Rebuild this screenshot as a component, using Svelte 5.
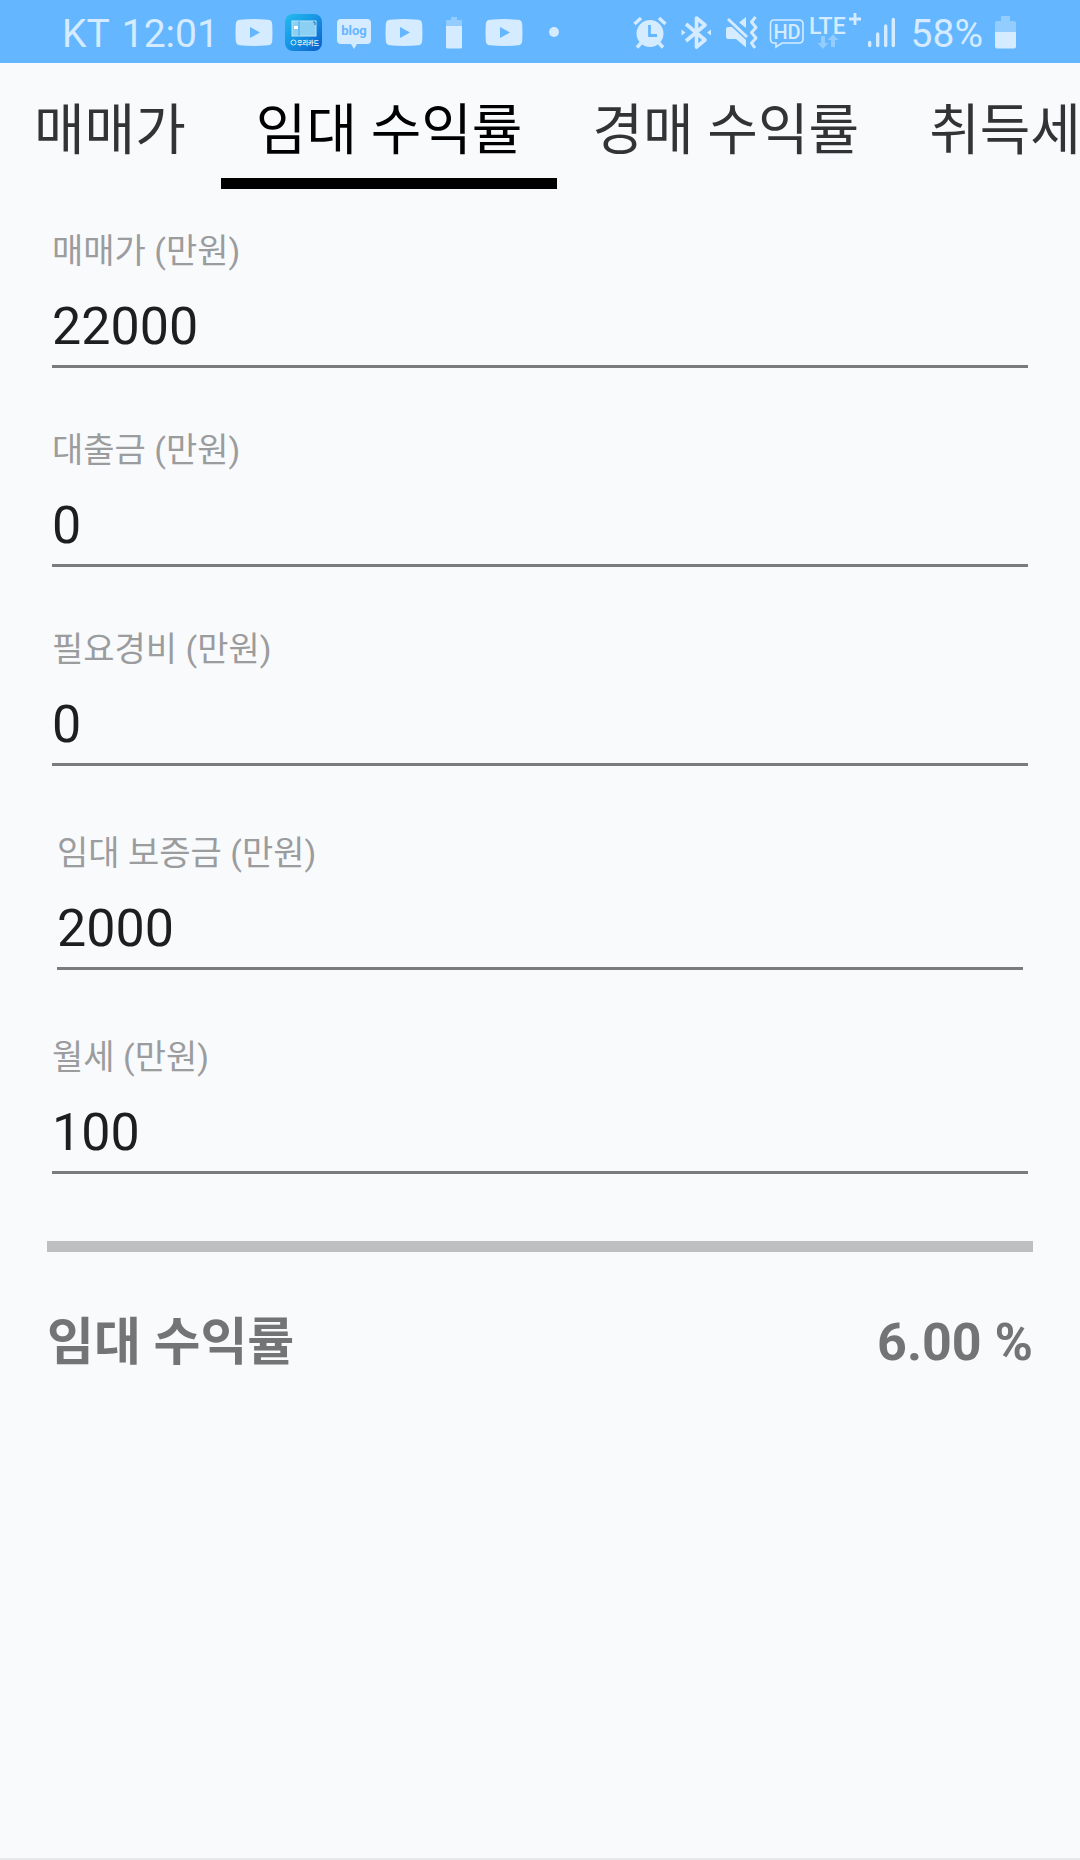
<script>
	const tabs = ['매매가', '임대 수익률', '경매 수익률', '취득세'];
	const notifications = ['video', 'card', 'blog', 'video', 'charge', 'video', 'dot'];

	let active = $state(1);

	let fields = $state([
		{ id: 'price', label: '매매가 (만원)', value: '22000' },
		{ id: 'loan', label: '대출금 (만원)', value: '0' },
		{ id: 'cost', label: '필요경비 (만원)', value: '0' },
		{ id: 'deposit', label: '임대 보증금 (만원)', value: '2000', inset: true },
		{ id: 'rent', label: '월세 (만원)', value: '100' }
	]);

	let rate = $derived.by(() => {
		const [price, loan, cost, deposit, rent] = fields.map((f) => Number(f.value) || 0);
		const invested = price - loan + cost - deposit;
		return invested > 0 ? ((rent * 12) / invested) * 100 : 0;
	});
</script>

<div class="app">
	<header class="status">
		<div class="status__left">
			<div class="status__text status__text--clock">
				<span>KT</span>
				<span>12:01</span>
			</div>
			<div class="status__icons">
				{#each notifications as icon}
					<svg width="38" height="38" viewBox="0 0 38 38" aria-hidden="true">
						{#if icon === 'video'}
							<path class="fill" d="M5 6.800Q19 5.400 33 6.800Q37 7 37.200 11Q37.700 19.500 37.200 28Q37 32 33 32.300Q19 33.600 5 32.300Q1 32 .8 28Q.2 19.500 .8 11Q1 7 5 6.800Z" />
							<path class="cut" d="M15 14L25 19.500L15 25Z" />
						{:else if icon === 'card'}
							<defs>
								<linearGradient id="card" x1="0" y1="0" x2="1" y2="1">
									<stop offset="0" stop-color="#25bdf0" />
									<stop offset=".5" stop-color="#1592e2" />
									<stop offset="1" stop-color="#0b5cc9" />
								</linearGradient>
							</defs>
							<rect x="0" y="1" width="37" height="37" rx="8" fill="url(#card)" />
							<rect x="7" y="8" width="24" height="15" fill="#8bd0f3" stroke="#b9e4fa" />
							<path d="M14 8V23" stroke="#4aa9e4" />
							<path d="M9 13h4v3h-4z" fill="#fff" />
							<path d="M28 9h2v3" fill="none" stroke="#1a6fb8" />
							<circle cx="8.500" cy="29.500" r="2.500" fill="none" stroke="#d5ebff" />
							<text x="12" y="32" font-size="6" font-weight="700" fill="#e8f5ff">우리카드</text>
						{:else if icon === 'blog'}
							<path class="fill" d="M6 6H32Q36 6 36 10V27Q36 31 32 31H22L19 36L16 31H6Q2 31 2 27V10Q2 6 6 6Z" />
							<text class="cut blog" x="19" y="22" text-anchor="middle">blog</text>
						{:else if icon === 'charge'}
							<path class="dim" d="M16 4h6v3h4q1 0 1 1v6H11V8q0-1 1-1h4z" />
							<path class="fill" d="M11 13h16v21q0 1.500-1.500 1.500h-13Q11 35.500 11 34z" />
						{:else}
							<circle class="fill" cx="19" cy="19" r="5" />
						{/if}
					</svg>
				{/each}
			</div>
		</div>

		<div class="status__right">
			<!-- alarm -->
			<svg width="42" height="38" viewBox="0 0 42 38" aria-hidden="true">
				<circle class="fill" cx="19" cy="20.500" r="13.500" />
				<path class="line" stroke-width="3.400" d="M3.500 11L10 5M28 5L34.500 11M10 30L6 34.500M28 30L32 34.500" />
				<path class="line line--cut" stroke-width="2.800" d="M18.500 12V22.500H26" />
			</svg>
			<!-- bluetooth -->
			<svg width="42" height="38" viewBox="0 0 42 38" aria-hidden="true">
				<path class="line" stroke-width="3.600" stroke-linejoin="round" d="M9 11L28 27L19.500 34V5L28 12L9 28" />
				<path class="fill" d="M4.500 16.500L8.500 19.500L4.500 22.500ZM34 16.500V22.500L30 19.500Z" />
			</svg>
			<!-- muted, vibrating -->
			<svg width="42" height="38" viewBox="0 0 42 38" aria-hidden="true">
				<path class="fill" d="M5 14H9L23 27V34.500L13 26H5Q3 26 3 24V16Q3 14 5 14Z" />
				<path class="fill" d="M23 4V15L16 9.500Z" />
				<path class="line" stroke-width="3" d="M5 6L24 24" />
				<path class="line" stroke-width="3" stroke-linejoin="round" d="M32.500 4L28.500 9L33 14.500L28.500 19.500L33 25L28.500 30L32 35" />
			</svg>
			<!-- HD call -->
			<svg width="36" height="38" viewBox="0 0 36 38" aria-hidden="true">
				<path class="line" stroke-width="1.600" d="M5 7H30Q34 7 34 11V26Q34 30 30 30H13L7 34V30H5Q1.500 30 1.500 26V11Q1.500 7 5 7Z" />
				<text class="fill hd" x="18" y="25.500" text-anchor="middle">HD</text>
			</svg>
			<svg width="54" height="38" viewBox="0 0 54 38" aria-hidden="true">
				<text class="fill lte" x="0" y="21">LTE</text>
				<path class="line" stroke-width="2.800" d="M46 0V12M40 6H52" />
				<path class="dim" d="M12 23h4v7h3.500L14 36L8.500 30H12zM22 34h4v-7h3.500L24 21.500L18.500 27H22z" />
			</svg>
			<!-- signal -->
			<svg width="30" height="38" viewBox="0 0 30 38" aria-hidden="true">
				<path class="line" stroke-width="3.400" stroke-linecap="round" d="M2.700 29.500V32.500M10.700 21V32.500M18.700 13V32.500M26.300 6.500V32.500" />
			</svg>
			<span class="status__text status__text--battery">58%</span>
			<svg width="24" height="38" viewBox="0 0 24 38" aria-hidden="true">
				<path class="dim" d="M7 3h9v5h4q2 0 2 2v10H1V10q0-2 2-2h4z" />
				<path class="fill" d="M1 19h21v14.500q0 2-2 2H3q-2 0-2-2z" />
			</svg>
		</div>
	</header>

	<nav class="tabs">
		{#each tabs as tab, i}
			<button class="tab" class:tab--active={i === active} onclick={() => (active = i)}>{tab}</button>
		{/each}
	</nav>

	<main>
		<form class="form">
			{#each fields as field (field.id)}
				<div class="field" class:field--inset={field.inset}>
					<label class="field__label" for={field.id}>{field.label}</label>
					<input class="field__input" id={field.id} type="text" inputmode="numeric" bind:value={field.value} />
				</div>
			{/each}
		</form>

		<section class="result">
			<span class="result__label">임대 수익률</span>
			<output class="result__value">{rate.toFixed(2)} %</output>
		</section>
	</main>
</div>

<style>
	:global(body) {
		margin: 0;
		background: #f9fafc;
	}

	.app {
		box-sizing: border-box;
		min-height: 100vh;
		border-bottom: 2px solid #e4e8e8;
		font-family: Roboto, "Noto Sans CJK KR", sans-serif;
		overflow: hidden;
	}

	.status {
		display: flex;
		justify-content: space-between;
		align-items: center;
		height: 63px;
		padding: 0 62px;
		background: #64b6ff;
		color: #d5ebff;
	}

	.status__left,
	.status__right,
	.status__icons {
		display: flex;
		align-items: center;
	}

	.status__left {
		gap: 16px;
	}

	.status__icons {
		gap: 12px;
	}

	.status__right {
		gap: 4px;
	}

	.status__text {
		font-size: 39px;
		line-height: 40px;
		padding-top: 4px;
		white-space: nowrap;
	}

	.status__text--clock {
		display: flex;
		gap: 12px;
	}

	.status__text--battery {
		margin: 0 7px 0 10px;
	}

	svg {
		display: block;
		flex: none;
	}

	.fill {
		fill: #d5ebff;
	}

	.cut {
		fill: #64b6ff;
	}

	.dim {
		fill: #93ccff;
	}

	.line {
		fill: none;
		stroke: #d5ebff;
	}

	.line--cut {
		stroke: #64b6ff;
	}

	.blog {
		font-size: 13px;
		font-weight: 700;
	}

	.hd {
		font-size: 20px;
		font-weight: 500;
	}

	.lte {
		font-size: 23px;
		font-weight: 500;
	}

	.tabs {
		display: flex;
		margin-left: -1px;
		overflow: hidden;
	}

	.tab {
		flex: none;
		box-sizing: border-box;
		height: 126px;
		padding: 18px 35px 0;
		border: 0;
		border-bottom: 11px solid transparent;
		background: none;
		color: #323335;
		font-family: inherit;
		font-size: 55px;
		font-weight: 400;
		line-height: 80px;
		white-space: nowrap;
	}

	.tab--active {
		border-bottom-color: #000;
		color: #000;
	}

	main {
		padding: 42px 47px 0;
	}

	.form {
		display: flex;
		flex-direction: column;
		gap: 61px;
		padding: 0 5px;
	}

	.field {
		display: flex;
		flex-direction: column;
		gap: 16px;
	}

	.field--inset {
		margin: 5px;
	}

	.field__label {
		color: #9b9c9d;
		font-size: 34px;
		line-height: 40px;
	}

	.field__input {
		box-sizing: border-box;
		width: 100%;
		height: 81px;
		margin-bottom: 1px;
		padding: 0;
		border: 0;
		border-bottom: 3px solid #7a7b7d;
		border-radius: 0;
		outline: none;
		background: none;
		color: #1d1e20;
		font-family: inherit;
		font-size: 52px;
	}

	.result {
		display: flex;
		justify-content: space-between;
		align-items: center;
		margin-top: 66px;
		padding-top: 51px;
		border-top: 11px solid #bebfc1;
		color: #737476;
		font-weight: 700;
		line-height: 80px;
	}

	.result__label {
		font-size: 51px;
	}

	.result__value {
		font-size: 52px;
	}
</style>
